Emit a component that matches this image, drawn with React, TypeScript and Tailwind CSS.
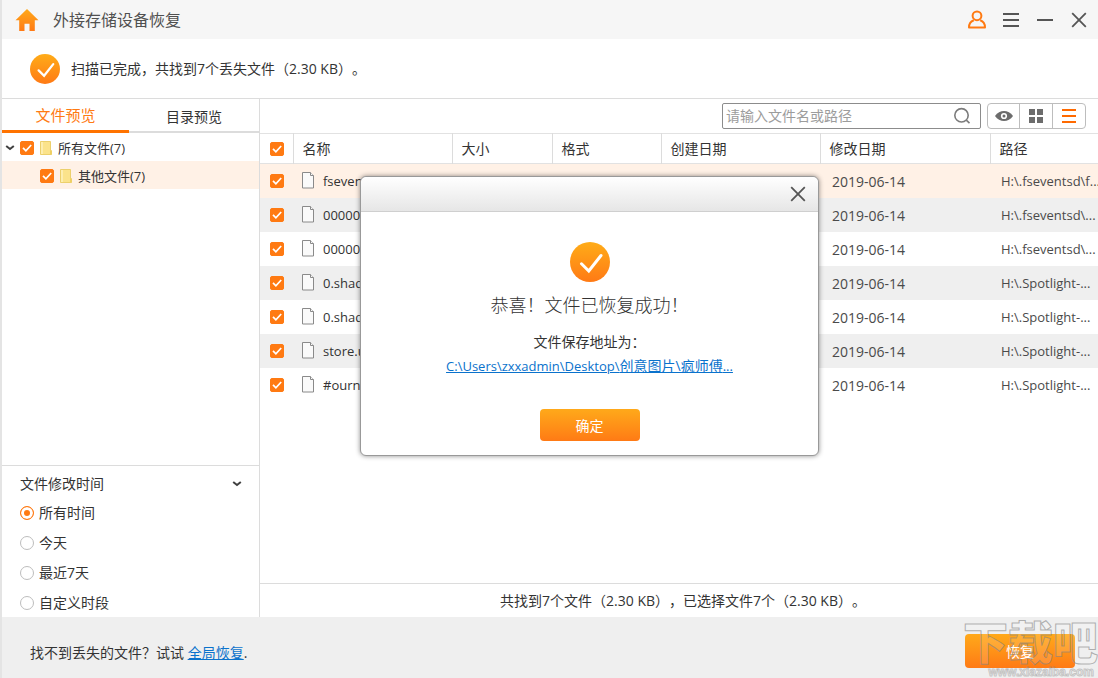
import React, { useState } from 'react';
import clsx from 'clsx';

interface FileRow {
  name: string;
  modified: string;
  path: string;
}

const files: FileRow[] = [
  { name: 'fseven', modified: '2019-06-14', path: 'H:\\.fseventsd\\f...' },
  { name: '000000', modified: '2019-06-14', path: 'H:\\.fseventsd\\...' },
  { name: '000000', modified: '2019-06-14', path: 'H:\\.fseventsd\\...' },
  { name: '0.shadow', modified: '2019-06-14', path: 'H:\\.Spotlight-...' },
  { name: '0.shadow', modified: '2019-06-14', path: 'H:\\.Spotlight-...' },
  { name: 'store.up', modified: '2019-06-14', path: 'H:\\.Spotlight-...' },
  { name: '#ournal', modified: '2019-06-14', path: 'H:\\.Spotlight-...' }
];

const columns = [
  { label: '名称', width: 'w-[159px]' },
  { label: '大小', width: 'w-[100px]' },
  { label: '格式', width: 'w-[109px]' },
  { label: '创建日期', width: 'w-[159px]' },
  { label: '修改日期', width: 'w-[170px]' },
  { label: '路径', width: '' }
];

const periods = ['所有时间', '今天', '最近7天', '自定义时段'];

const Checkbox: React.FC<{ label: string }> = ({ label }) => (
  <span className="inline-grid h-[14px] w-[14px] shrink-0">
    <input
      type="checkbox"
      defaultChecked
      aria-label={label}
      className="peer col-start-1 row-start-1 h-[14px] w-[14px] appearance-none rounded-xs border border-gray-400 bg-white checked:border-[#ff7a12] checked:bg-[#ff7a12]"
    />
    <svg
      viewBox="0 0 14 14"
      className="pointer-events-none invisible col-start-1 row-start-1 h-[14px] w-[14px] peer-checked:visible"
      fill="none"
      stroke="#fff"
      strokeWidth="1.7"
    >
      <path d="M3 6.8l2.9 3L11.2 4" />
    </svg>
  </span>
);

const FolderIcon = () => (
  <svg viewBox="0 0 12 14" className="h-[14px] w-3 shrink-0">
    <path d="M.5.5h10v9.2h1v3.8H.5z" fill="#fbe38b" stroke="#ecd06c" />
    <path d="M1 1h2v12H1z" fill="#fdeeb0" />
    <path d="M10 9.5h1.5v4H10z" fill="#efd062" />
  </svg>
);

const FileIcon = () => (
  <svg viewBox="0 0 14 17" className="h-[17px] w-[14px] shrink-0" fill="#fafafa" stroke="#8a8a8a">
    <path d="M1.5.5h8l3 3v12.5h-11z" />
    <path d="M9.5.5v3h3" />
  </svg>
);

const SuccessIcon: React.FC<{ id: string; className: string }> = ({ id, className }) => (
  <svg viewBox="0 0 40 40" className={className}>
    <defs>
      <linearGradient id={id} x1="0" y1="0" x2="0" y2="1">
        <stop offset="0" stopColor="#ffac18" />
        <stop offset="1" stopColor="#ff7a15" />
      </linearGradient>
    </defs>
    <circle cx="20" cy="20" r="20" fill={`url(#${id})`} />
    <path
      d="M11.5 21.8l7.3 7.2L31 13.5"
      fill="none"
      stroke="#fff"
      strokeWidth="3"
      strokeLinecap="round"
    />
  </svg>
);

const ChevronIcon = () => (
  <svg viewBox="0 0 10 6" className="h-[6px] w-[10px] shrink-0" fill="none" stroke="#404040" strokeWidth="2">
    <path d="M1.2 1l3.8 3 3.8-3" />
  </svg>
);

const CloseIcon = () => (
  <svg viewBox="0 0 16 16" className="h-4 w-4" stroke="#555" strokeWidth="1.8">
    <path d="M1.2 1.2l13.6 13.6M14.8 1.2L1.2 14.8" />
  </svg>
);

const TitleBar = () => (
  <header className="flex h-[39px] shrink-0 items-center bg-[#f6f6f6] pr-[9px] pl-[13px]">
    <a href="#" aria-label="主页">
      <svg viewBox="0 0 24 22" className="h-[22px] w-6">
        <defs>
          <linearGradient id="home" x1="0" y1="0" x2="0" y2="1">
            <stop offset="0" stopColor="#ffa91a" />
            <stop offset="1" stopColor="#ff7a15" />
          </linearGradient>
        </defs>
        <path d="M12 0l11.5 11.2h-3.7V22h-5.3v-7.3h-5V22H4.2V11.2H.5z" fill="url(#home)" />
      </svg>
    </a>
    <h1 className="ml-[14px] grow text-base text-[#505050]">外接存储设备恢复</h1>
    <div className="flex items-center gap-[14px]">
      <button aria-label="账户" className="grid h-5 w-5 place-items-center">
        <svg viewBox="0 0 20 20" className="h-5 w-5" fill="none" stroke="#ff7a12" strokeWidth="2">
          <circle cx="10" cy="5.8" r="4.4" />
          <path d="M6.8 10.2C3.600 11.300 2 13.600 2 17.500h16c0-3.900-1.600-6.200-4.800-7.300" strokeLinejoin="round" />
        </svg>
      </button>
      <button aria-label="菜单" className="grid h-5 w-5 place-items-center">
        <svg viewBox="0 0 18 16" className="h-4 w-[18px]" stroke="#555" strokeWidth="2">
          <path d="M1 2h16M1 8h16M1 14h16" />
        </svg>
      </button>
      <button aria-label="最小化" className="grid h-5 w-5 place-items-center">
        <svg viewBox="0 0 18 16" className="h-4 w-[18px]" stroke="#555" strokeWidth="2">
          <path d="M1 8h16" />
        </svg>
      </button>
      <button aria-label="关闭" className="grid h-5 w-5 place-items-center">
        <CloseIcon />
      </button>
    </div>
  </header>
);

const Sidebar = () => {
  const [period, setPeriod] = useState(periods[0]);

  return (
    <aside className="flex w-[258px] shrink-0 flex-col border-r border-[#dcdcdc]">
      <div className="flex h-[34px] text-sm">
        <button className="w-[127px] border-b-3 border-[#ff7300] pt-[3px] text-[15px] text-[#ff7a12]">文件预览</button>
        <button className="grow border-b-2 border-[#dcdcdc] pt-[3px]">目录预览</button>
      </div>

      {/* Árbol de carpetas */}
      <div className="grow">
        <div className="flex h-7 items-center pt-[2px] pl-[3px]">
          <ChevronIcon />
          <label className="ml-[5px] flex items-center gap-[6px] text-[13px]">
            <Checkbox label="所有文件" />
            <FolderIcon />
            <span className="pt-[2px]">所有文件(7)</span>
          </label>
        </div>
        <div className="flex h-7 items-center bg-[#fff1e6] pt-[2px] pl-[38px]">
          <label className="flex items-center gap-[6px] text-[13px]">
            <Checkbox label="其他文件" />
            <FolderIcon />
            <span className="pt-[2px]">其他文件(7)</span>
          </label>
        </div>
      </div>

      <fieldset className="border-t border-[#dcdcdc] text-sm">
        <button className="flex h-[31px] w-full items-center justify-between pt-[5px] pr-[17px] pl-[18px]">
          文件修改时间
          <ChevronIcon />
        </button>
        {periods.map((item) => (
          <label key={item} className="flex h-[30px] items-center gap-[5px] pt-px pl-[18px]">
            <input
              type="radio"
              name="period"
              checked={period === item}
              onChange={() => setPeriod(item)}
              className="h-[14px] w-[14px] appearance-none rounded-full border border-[#bdbdbd] bg-white checked:border-[#ff7a12] checked:bg-[#ff7a12] checked:shadow-[inset_0_0_0_3px_#fff]"
            />
            {item}
          </label>
        ))}
      </fieldset>
    </aside>
  );
};

const Toolbar = () => (
  <div className="flex h-[34px] shrink-0 items-center justify-end gap-[6px] pr-3">
    <div className="flex h-[26px] w-[259px] items-center rounded-xs border border-[#8c8c8c] px-[3px]">
      <input
        type="text"
        aria-label="搜索"
        placeholder="请输入文件名或路径"
        className="min-w-0 grow text-sm outline-none placeholder:text-[#9c9c9c]"
      />
      <button aria-label="搜索文件" className="mr-[6px]">
        <svg viewBox="0 0 18 18" className="h-[18px] w-[18px]" fill="none" stroke="#7c7c7c" strokeWidth="1.6">
          <circle cx="8.5" cy="8.3" r="6.7" />
          <path d="M13.3 13.2l3.2 3" />
        </svg>
      </button>
    </div>
    <div className="flex h-[26px] divide-x divide-[#bdbdbd] rounded-sm border border-[#bdbdbd]">
      <button aria-label="预览" className="grid w-8 place-items-center">
        <svg viewBox="0 0 20 12" className="h-3 w-5">
          <path d="M1 6C5.500-.6 14.500-.6 19 6 14.500 12.600 5.500 12.600 1 6z" fill="#6c6c6c" />
          <circle cx="10" cy="6" r="3.1" fill="#fff" />
          <circle cx="10" cy="6" r="1.5" fill="#6c6c6c" />
        </svg>
      </button>
      <button aria-label="缩略图" className="grid w-[33px] place-items-center">
        <svg viewBox="0 0 16 16" className="h-4 w-4" fill="#6c6c6c">
          <path d="M1 1h6v6H1zM9 1h6v6H9zM1 9h6v6H1zM9 9h6v6H9z" />
        </svg>
      </button>
      <button aria-label="列表" className="grid w-8 place-items-center">
        <svg viewBox="0 0 14 16" className="h-4 w-[14px]" stroke="#ff6a00" strokeWidth="2">
          <path d="M0 2h14M0 8h14M0 14h14" />
        </svg>
      </button>
    </div>
  </div>
);

const FileTable = () => (
  <table className="w-full table-fixed border-collapse text-left text-sm">
    <thead>
      <tr className="h-[30px] border-y border-[#e2e2e2]">
        <th className="w-[33px] pl-[10px] font-normal">
          <span className="flex">
            <Checkbox label="全选" />
          </span>
        </th>
        {columns.map((column) => (
          <th key={column.label} className={clsx('border-l border-[#dcdcdc] pl-[9px] font-normal', column.width)}>
            {column.label}
          </th>
        ))}
      </tr>
    </thead>
    <tbody>
      {files.map((file, index) => (
        <tr
          key={index}
          className={clsx('h-[34px]', index === 0 ? 'bg-[#fff1e6]' : index % 2 === 1 ? 'bg-[#efefef]' : 'bg-white')}
        >
          <td className="pl-[10px]">
            <span className="flex">
              <Checkbox label={file.name} />
            </span>
          </td>
          <td className="pl-2">
            <span className="flex items-center gap-2 text-[13px]">
              <FileIcon />
              <span className="pt-[2px]">{file.name}</span>
            </span>
          </td>
          <td />
          <td />
          <td />
          <td className="pt-[2px] pl-3 text-[#4a4a4a]">{file.modified}</td>
          <td className="pt-[2px] pl-[11px] text-[13px] whitespace-nowrap text-[#4a4a4a]">{file.path}</td>
        </tr>
      ))}
    </tbody>
  </table>
);

const SuccessDialog: React.FC<{ onClose: () => void }> = ({ onClose }) => (
  <div
    role="dialog"
    aria-label="恢复成功"
    className="absolute top-[176px] left-[358px] w-[459px] rounded-md border border-[#999] bg-white shadow-[0_0_5px_rgba(0,0,0,0.45)]"
  >
    <div className="flex h-[35px] items-center justify-end rounded-t-md border-b border-[#cfcfcf] bg-linear-to-b from-white to-[#e6e6e6] pr-3">
      <button aria-label="关闭对话框" onClick={onClose}>
        <CloseIcon />
      </button>
    </div>
    <div className="flex flex-col items-center pt-[30px] pb-[14px] text-center">
      <SuccessIcon id="dialog-check" className="h-10 w-10" />
      <h2 className="mt-2 font-['Noto_Sans_CJK_SC',sans-serif] text-lg leading-7 font-light text-[#333]">
        恭喜！文件已恢复成功！
      </h2>
      <p className="mt-3 text-sm leading-6">文件保存地址为：</p>
      <a href="#" className="text-[13px] leading-6 text-[#0a72cc] underline">
        C:\Users\zxxadmin\Desktop\<span className="text-sm">创意图片\疯师傅</span>...
      </a>
      <button
        onClick={onClose}
        className="mt-[31px] h-8 w-[100px] rounded-sm bg-linear-to-b from-[#ffa91a] to-[#ff7a15] pt-px text-sm text-white"
      >
        确定
      </button>
    </div>
  </div>
);

const App: React.FC = () => {
  const [showDialog, setShowDialog] = useState(true);

  return (
    <div className="relative flex min-h-screen flex-col overflow-hidden border-l-2 border-[#e4e4e4] bg-white font-['Open_Sans','Noto_Sans_CJK_SC',sans-serif] text-[#333] [text-spacing-trim:space-all]">
      <TitleBar />

      <div className="flex h-[60px] shrink-0 items-center gap-[11px] border-b border-[#dcdcdc] pl-7 text-sm">
        <SuccessIcon id="banner-check" className="h-[30px] w-[30px]" />
        <p>扫描已完成，共找到7个丢失文件（2.30 KB）。</p>
      </div>

      <div className="flex grow">
        <Sidebar />
        <main className="flex min-w-0 grow flex-col">
          <Toolbar />
          <div className="grow">
            <FileTable />
          </div>
          <p className="h-[34px] border-t border-[#dcdcdc] pt-[5px] pl-2 text-center text-sm leading-6">
            共找到7个文件（2.30 KB），已选择文件7个（2.30 KB）。
          </p>
        </main>
      </div>

      <footer className="relative flex h-[61px] shrink-0 items-center justify-between bg-[#efefef] pr-[23px] pl-7 text-sm">
        <p className="pt-[10px]">
          找不到丢失的文件？试试{' '}
          <a href="#" className="text-[#0a72cc] underline">
            全局恢复
          </a>
          .
        </p>
        <button
          onClick={() => setShowDialog(true)}
          className="mt-[7px] h-[34px] w-[110px] rounded-sm bg-linear-to-b from-[#ffa91a] to-[#ff7a15] pt-[2px] text-sm text-white"
        >
          恢复
        </button>

        {/* Marca de agua */}
        <div className="pointer-events-none absolute right-0 bottom-0 flex flex-col items-end text-white/15">
          <span className="text-[45px] leading-[46px] font-black [-webkit-text-stroke:1px_rgba(130,130,130,0.6)]">下载吧</span>
          <span className="pr-1 font-['Liberation_Sans',sans-serif] text-xs leading-3 font-bold [-webkit-text-stroke:1px_rgba(130,130,130,0.4)]">
            www.xiazaiba.com
          </span>
        </div>
      </footer>

      {showDialog && <SuccessDialog onClose={() => setShowDialog(false)} />}
    </div>
  );
};

export default App;
